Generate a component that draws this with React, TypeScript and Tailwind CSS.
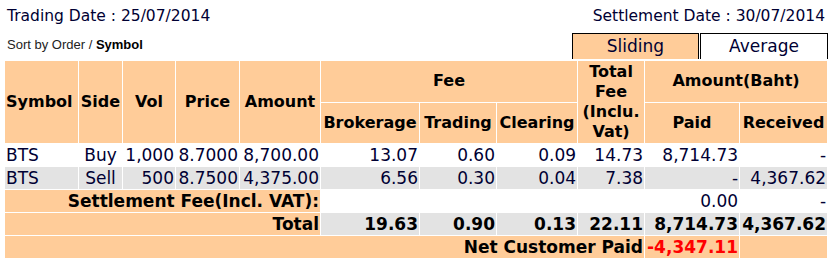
const peach = 'bg-[#ffcc99]';
const gray = 'bg-[#e3e3e3]';

const trades = [
  ['BTS', 'Buy', '1,000', '8.7000', '8,700.00', '13.07', '0.60', '0.09', '14.73', '8,714.73', '-'],
  ['BTS', 'Sell', '500', '8.7500', '4,375.00', '6.56', '0.30', '0.04', '7.38', '-', '4,367.62'],
];

const colWidths = [
  'w-[73px]', 'w-[43px]', 'w-[52px]', 'w-[63px]', 'w-[80px]', 'w-[98px]',
  'w-[76px]', 'w-[80px]', 'w-[66px]', 'w-[94px]', 'w-[87px]',
];

export default function App() {
  const th = `${peach} px-[1px] py-[1px] align-middle font-bold text-[16px] leading-[20px] text-black`;
  const cell = 'px-[1px] py-[1px] text-[17px] leading-[20px] whitespace-nowrap';
  const td = `${cell} text-right`;
  const strong = 'font-bold text-[16px] text-black';

  return (
    <div className="h-[271px] w-[833px] overflow-hidden bg-white font-['DejaVu_Sans',sans-serif] text-[#000033]">
      <div className="flex justify-between pl-[7px] pr-[8px] pt-[6px] text-[15.5px] leading-[20px]">
        <span>Trading Date : 25/07/2014</span>
        <span>Settlement Date : 30/07/2014</span>
      </div>

      <div className="mt-[7px] flex items-start justify-between pl-[7px] pr-[5px]">
        <div className="mt-[4px] font-['Liberation_Sans',Arial,sans-serif] text-[13px] leading-[16px] text-[#222]">
          Sort by Order / <span className="font-bold text-black">Symbol</span>
        </div>
        <div className="flex gap-[1px] text-[17px] leading-[25px]">
          <div className={`${peach} w-[127px] border-x border-t border-black text-center`}>Sliding</div>
          <div className="w-[128px] border-x border-t border-black bg-white text-center">Average</div>
        </div>
      </div>

      <table className="ml-[4px] mt-[1px] w-[824px] table-fixed border-separate border-spacing-[1px]">
        <colgroup>
          {colWidths.map((w, i) => (
            <col key={i} className={w} />
          ))}
        </colgroup>
        <thead>
          <tr>
            <th rowSpan={2} className={`${th} text-left`}>Symbol</th>
            <th rowSpan={2} className={`${th} text-center`}>Side</th>
            <th rowSpan={2} className={`${th} text-center`}>Vol</th>
            <th rowSpan={2} className={`${th} text-center`}>Price</th>
            <th rowSpan={2} className={`${th} text-center`}>Amount</th>
            <th colSpan={3} className={`${th} text-center`}>Fee</th>
            <th rowSpan={2} className={`${th} text-center`}>
              Total<br />Fee<br />(Inclu.<br />Vat)
            </th>
            <th colSpan={2} className={`${th} text-center`}>Amount(Baht)</th>
          </tr>
          <tr>
            <th className={`${th} text-center`}>Brokerage</th>
            <th className={`${th} text-center`}>Trading</th>
            <th className={`${th} text-center`}>Clearing</th>
            <th className={`${th} text-center`}>Paid</th>
            <th className={`${th} text-center`}>Received</th>
          </tr>
        </thead>
        <tbody>
          {trades.map((row, r) => (
            <tr key={r} className={r === 1 ? gray : 'bg-white'}>
              {row.map((v, c) => (
                <td
                  key={c}
                  className={`${cell} ${c === 0 ? 'text-left' : c === 1 ? 'text-center' : 'text-right'}`}
                >
                  {v}
                </td>
              ))}
            </tr>
          ))}
          <tr>
            <td colSpan={5} className={`${td} ${peach} ${strong}`}>
              Settlement Fee(Incl. VAT):
            </td>
            <td className={td}></td>
            <td className={td}></td>
            <td className={td}></td>
            <td className={td}></td>
            <td className={td}>0.00</td>
            <td className={td}>-</td>
          </tr>
          <tr>
            <td colSpan={5} className={`${td} ${peach} ${strong}`}>Total</td>
            {['19.63', '0.90', '0.13', '22.11', '8,714.73', '4,367.62'].map((v) => (
              <td key={v} className={`${td} ${gray} ${strong}`}>{v}</td>
            ))}
          </tr>
          <tr>
            <td colSpan={9} className={`${td} ${peach} ${strong}`}>
              Net Customer Paid
            </td>
            <td className={`${td} ${peach} font-bold text-[16px] text-[#ff0000]`}>-4,347.11</td>
            <td className={`${td} ${peach}`}></td>
          </tr>
        </tbody>
      </table>
    </div>
  );
}
